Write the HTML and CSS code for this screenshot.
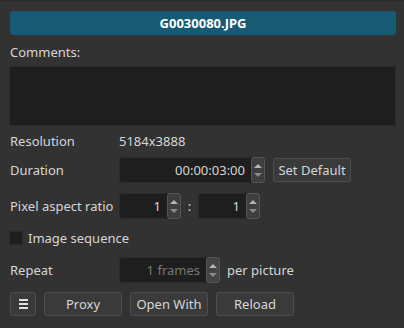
FILE: index.html
```html
<!DOCTYPE html>
<html lang="en">
<head>
  <meta charset="UTF-8">
  <title>Clip Properties</title>
  <link rel="stylesheet" href="styles.css">
</head>
<body>
  <div class="panel">
    <div class="title">G0030080.JPG</div>

    <div class="label comments-label">Comments:</div>
    <div class="comments"></div>

    <div class="row row-res">
      <span class="label key">Resolution</span>
      <span class="label">5184x3888</span>
    </div>

    <div class="row row-dur">
      <span class="label key">Duration</span>
      <div class="spin spin-dur">
        <span class="value">00:00:03:00</span>
        <span class="arrows"><i class="up"></i><i class="down"></i></span>
      </div>
      <button class="btn btn-default">Set Default</button>
    </div>

    <div class="row row-par">
      <span class="label key">Pixel aspect ratio</span>
      <div class="spin spin-small">
        <span class="value">1</span>
        <span class="arrows"><i class="up"></i><i class="down"></i></span>
      </div>
      <span class="label colon">:</span>
      <div class="spin spin-small">
        <span class="value">1</span>
        <span class="arrows"><i class="up"></i><i class="down"></i></span>
      </div>
    </div>

    <label class="check-row">
      <span class="checkbox"></span>
      <span class="label">Image sequence</span>
    </label>

    <div class="row row-rep">
      <span class="label key">Repeat</span>
      <div class="spin spin-rep disabled">
        <span class="value">1 frames</span>
        <span class="arrows"><i class="up"></i><i class="down"></i></span>
      </div>
      <span class="label">per picture</span>
    </div>

    <div class="buttons">
      <button class="btn btn-menu"><span class="bars"></span></button>
      <button class="btn">Proxy</button>
      <button class="btn">Open With</button>
      <button class="btn">Reload</button>
    </div>
  </div>
</body>
</html>
```

FILE: styles.css
```css
body {
  margin: 0;
  background-color: #323232;
  font-family: "Noto Sans", sans-serif;
  font-size: 13px;
  color: #d6d6d6;
  width: 404px;
  height: 328px;
  overflow: hidden;
}
.panel {
  border-top: 1px solid #2a2a2a;
  padding: 10px 8px 0 9px;
}
.title {
  height: 24px;
  margin-left: 1px;
  background-color: #175a74;
  border-radius: 3px;
  color: #fff;
  font-weight: bold;
  font-size: 13px;
  line-height: 24px;
  text-align: center;
}
.label {
  line-height: 18px;
  white-space: nowrap;
}
.comments-label {
  margin-top: 8px;
  margin-left: 1px;
}
.comments {
  height: 58px;
  margin-top: 5px;
  background-color: #1e1e1e;
  border: 1px solid #2a2a2a;
}
.row {
  display: flex;
  align-items: center;
  padding-left: 1px;
}
.key {
  width: 109px;
  flex: none;
}
.row-res {
  margin-top: 6px;
  height: 18px;
}
.row-dur {
  margin-top: 7px;
}
.row-par {
  margin-top: 10px;
}
.spin {
  display: flex;
  height: 26px;
  box-sizing: border-box;
  background-color: #1e1e1e;
  border: 1px solid #2a2a2a;
  border-radius: 3px;
}
.spin .value {
  flex: 1;
  text-align: right;
  line-height: 24px;
  padding-right: 6px;
}
.arrows {
  width: 12px;
  display: flex;
  flex-direction: column;
  align-items: center;
  justify-content: center;
  gap: 5px;
  background-color: #3e3e3e;
  border: 1px solid #555;
  border-radius: 3px;
  margin: -1px -1px -1px 0;
}
.arrows i {
  width: 0;
  height: 0;
  border-left: 4px solid transparent;
  border-right: 4px solid transparent;
}
.arrows .up {
  border-bottom: 4px solid #b4b4b4;
}
.arrows .down {
  border-top: 4px solid #8a8a8a;
}
.spin-dur {
  width: 146px;
}
.spin-small {
  width: 62px;
}
.spin-rep {
  width: 101px;
}
.disabled .value {
  color: #777;
}
.disabled .arrows {
  background-color: #444;
}
.colon {
  width: 17px;
  text-align: center;
}
.btn {
  height: 24px;
  width: 78px;
  padding: 0;
  background-color: #3a3a3a;
  border: 1px solid #4e4e4e;
  border-radius: 3px;
  color: #d6d6d6;
  font-family: "Noto Sans", sans-serif;
  font-size: 13px;
}
.btn-default {
  margin-left: 8px;
}
.check-row {
  display: flex;
  align-items: center;
  gap: 5px;
  margin-top: 10px;
}
.checkbox {
  width: 14px;
  height: 14px;
  box-sizing: border-box;
  background-color: #1e1e1e;
  border: 1px solid #2a2a2a;
  border-radius: 2px;
}
.row-rep {
  margin-top: 10px;
}
.row-rep .spin + .label {
  margin-left: 7px;
}
.buttons {
  display: flex;
  gap: 8px;
  margin-top: 9px;
  padding-left: 1px;
}
.btn-menu {
  width: 26px;
  display: flex;
  align-items: center;
  justify-content: center;
}
.bars {
  width: 9px;
  height: 2px;
  background-color: #e0e0e0;
  box-shadow: 0 -4px 0 #e0e0e0, 0 4px 0 #e0e0e0;
}
```
